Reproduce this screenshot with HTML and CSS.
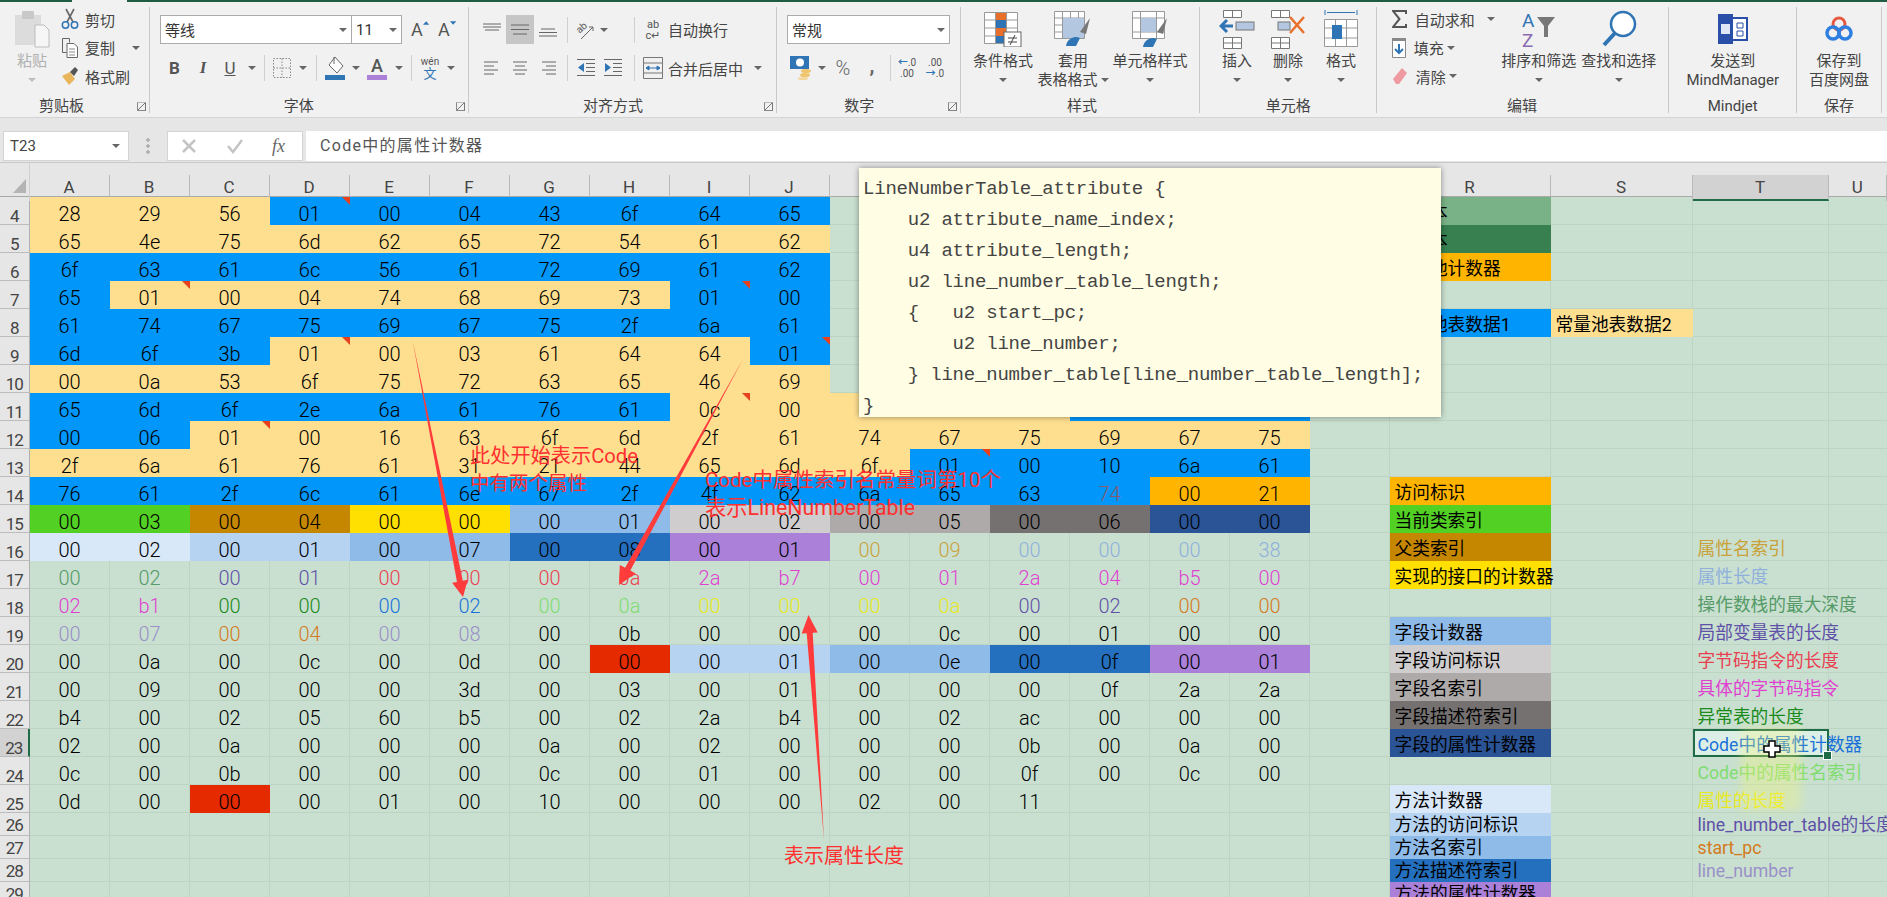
FILE: index.html
```html
<!DOCTYPE html>
<html lang="zh-CN">
<head>
  <meta charset="UTF-8">
  <title>Excel - Code属性</title>
  <link rel="stylesheet" href="styles.css">
</head>
<body>
<div class="page">

  <!-- title bar edge -->
  <div class="topbar"><div class="w72"></div><div class="tabmark"></div></div>

  <!-- ribbon -->
  <div class="ribbon">

    <div class="group g-clip">
      <div class="gbody">
        <div class="big paste">
          <div class="big-ico">
            <svg width="36" height="38" viewBox="0 0 36 38"><rect x="1" y="5" width="26" height="30" fill="#dcdcdc"/><rect x="8" y="1" width="12" height="8" rx="1" fill="#c8c8c8"/><path d="M21 15h9l5 5v17H21z" fill="#f6f6f6" stroke="#bdbdbd"/></svg>
          </div>
          <div class="line muted">粘贴</div>
          <div class="line"><i class="caret light"></i></div>
        </div>
        <div class="stack clip-stack">
          <div class="sitem">
            <svg class="s-ico" width="18" height="22" viewBox="0 0 18 22"><path d="M5 1l7 13M13 1L6 14" stroke="#666" stroke-width="1.6" fill="none"/><circle cx="4.5" cy="17" r="3.2" fill="none" stroke="#2f75b5" stroke-width="1.5"/><circle cx="13.5" cy="17" r="3.2" fill="none" stroke="#2f75b5" stroke-width="1.5"/></svg>
            <span>剪切</span>
          </div>
          <div class="sitem">
            <svg class="s-ico" width="18" height="22" viewBox="0 0 18 22"><path d="M1.500 1.500h7v4M1.500 1.500v14h4" fill="none" stroke="#666"/><path d="M6 6.500h7l3.500 3.500v10.500H6z" fill="#fff" stroke="#666"/><path d="M8 12h6M8 15h6M8 18h6" stroke="#888"/></svg>
            <span>复制</span><i class="caret cm"></i>
          </div>
          <div class="sitem">
            <svg class="s-ico" width="18" height="20" viewBox="0 0 18 20"><path d="M1 10l8-4 5 7-6 6z" fill="#e9b65c"/><path d="M9 6l5-5 3 3-4 6z" fill="#555"/></svg>
            <span>格式刷</span>
          </div>
        </div>
      </div>
      <div class="glabel">剪贴板</div>
      <i class="launcher"></i>
    </div>

    <div class="group g-font">
      <div class="gbody col">
        <div class="r1">
          <div class="sel-box w192"><span>等线</span><i class="caret"></i></div>
          <div class="sel-box w50 nol"><span>11</span><i class="caret"></i></div>
          <div class="grow-a">A<svg width="7" height="4" viewBox="0 0 7 4"><path d="M0 4l3.500-4 3.500 4z" fill="#2f75b5"/></svg></div>
          <div class="grow-a">A<svg width="7" height="4" viewBox="0 0 7 4"><path d="M0 0l3.500 4 3.500-4z" fill="#2f75b5"/></svg></div>
        </div>
        <div class="r2">
          <b class="bx w29 fmt">B</b>
          <i class="bx w28 fmt serif-i">I</i>
          <u class="bx w26 fmt">U</u>
          <div class="bx w18"><i class="caret"></i></div>
          <div class="bx w6"><i class="vsep"></i></div>
          <div class="bx w30"><svg width="18" height="20" viewBox="0 0 18 20"><path d="M.5.500h17v19H.500zM9 .500v19M.5 10h17" fill="none" stroke="#888" stroke-dasharray="1.500 1.500"/></svg></div>
          <div class="bx w12"><i class="caret"></i></div>
          <div class="bx w14"><i class="vsep"></i></div>
          <div class="bx w24"><svg width="20" height="24" viewBox="0 0 20 24"><path d="M10 1l8 9-6 7-8-8z" fill="#fff" stroke="#666"/><path d="M9 1v7" stroke="#666"/><rect y="19" width="20" height="5" fill="#2f75b5"/></svg></div>
          <div class="bx w18"><i class="caret"></i></div>
          <div class="bx w24 colora"><span>A</span><i></i></div>
          <div class="bx w20"><i class="caret"></i></div>
          <div class="bx w5"><i class="vsep"></i></div>
          <div class="bx w32 wen"><span>wén</span><span>文</span></div>
          <div class="bx w10"><i class="caret"></i></div>
        </div>
      </div>
      <div class="glabel">字体</div>
      <i class="launcher"></i>
    </div>

    <div class="group g-align">
      <div class="gbody col">
        <div class="r1">
          <div class="bx h29 w28"><svg width="18" height="14" viewBox="0 0 18 14"><path d="M0 1h18M0 4h18M2 7h14" stroke="#666"/></svg></div>
          <div class="bx h29 w28 on"><svg width="18" height="14" viewBox="0 0 18 14"><path d="M0 2h18M0 6.500h18M2 11h14" stroke="#666"/></svg></div>
          <div class="bx h29 w28"><svg width="18" height="14" viewBox="0 0 18 14"><path d="M2 6h14M0 9.500h18M0 13h18" stroke="#666"/></svg></div>
          <div class="bx h29 w10"><i class="vsep"></i></div>
          <div class="bx h29 w28"><svg width="20" height="22" viewBox="0 0 20 22"><text x="1" y="12" class="svgt" transform="rotate(-40 6 10)">ab</text><path d="M5 20L17 8M13 8h4v4" fill="none" stroke="#666"/></svg></div>
          <div class="bx h29 w8"><i class="caret"></i></div>
          <div class="bx h29 w22"></div>
          <div class="bx h29 w8"><i class="vsep"></i></div>
          <div class="bx h29 w30 wrapi"><span>ab</span><span>c↵</span></div>
          <span class="rlabel">自动换行</span>
        </div>
        <div class="r2">
          <div class="bx w28"><svg width="16" height="14" viewBox="0 0 16 14"><path d="M0 1h14M0 5h10M0 9h14M0 13h10" stroke="#666"/></svg></div>
          <div class="bx w28"><svg width="16" height="14" viewBox="0 0 16 14"><path d="M1 1h14M3 5h10M1 9h14M3 13h10" stroke="#666"/></svg></div>
          <div class="bx w28"><svg width="16" height="14" viewBox="0 0 16 14"><path d="M2 1h14M6 5h10M2 9h14M6 13h10" stroke="#666"/></svg></div>
          <div class="bx w10"><i class="vsep"></i></div>
          <div class="bx w27"><svg width="18" height="18" viewBox="0 0 18 18"><path d="M0 .500h18M9 4.500h9M9 8.500h9M9 12.500h9M0 16.500h18" stroke="#666"/><path d="M7 4v9L1 8.500z" fill="#2f75b5"/></svg></div>
          <div class="bx w27"><svg width="18" height="18" viewBox="0 0 18 18"><path d="M0 .500h18M9 4.500h9M9 8.500h9M9 12.500h9M0 16.500h18" stroke="#666"/><path d="M1 4v9l6-4.500z" fill="#2f75b5"/></svg></div>
          <div class="bx w4"></div>
          <div class="bx w8"><i class="vsep"></i></div>
          <div class="bx w30"><svg width="20" height="22" viewBox="0 0 20 22"><path d="M.5.500h19v21H.500zM.5 6h19M.5 16h19" fill="none" stroke="#777"/><path d="M3 11h14M3 11l3-2v4zM17 11l-3-2v4z" fill="#2f75b5" stroke="#2f75b5"/></svg></div>
          <span class="rlabel w75">合并后居中</span>
          <div class="bx w30"><i class="caret"></i></div>
        </div>
      </div>
      <div class="glabel">对齐方式</div>
      <i class="launcher"></i>
    </div>

    <div class="group g-num">
      <div class="gbody col">
        <div class="r1">
          <div class="sel-box w163"><span>常规</span><i class="caret"></i></div>
        </div>
        <div class="r2">
          <div class="bx w28"><svg width="23" height="24" viewBox="0 0 23 24"><rect width="19" height="13" fill="#2f75b5"/><circle cx="10" cy="6.500" r="4" fill="#fff"/><ellipse cx="16" cy="15" rx="5" ry="2" fill="#f0c36d"/><ellipse cx="15" cy="19" rx="5" ry="2" fill="#f0c36d"/><ellipse cx="13" cy="22.500" rx="5" ry="1.500" fill="#f3d69a"/></svg></div>
          <div class="bx w14"><i class="caret"></i></div>
          <div class="bx w28 pct">%</div>
          <div class="bx w30 comma">,</div>
          <div class="bx w6"><i class="vsep"></i></div>
          <div class="bx w28 dec"><span><em>←</em>.0</span><span>.00</span></div>
          <div class="bx w28 dec"><span>.00</span><span><em>→</em>.0</span></div>
        </div>
      </div>
      <div class="glabel">数字</div>
      <i class="launcher"></i>
    </div>

    <div class="group g-style">
      <div class="gbody">
        <div class="big w76">
          <div class="big-ico">
            <svg width="38" height="36" viewBox="0 0 38 36"><path d="M.5 1.500h33v31H.500zM11.500 1.500v31M22.500 1.500v31M.5 9h33M.5 17h33M.5 25h33" fill="#fff" stroke="#999"/><rect x="12" y="2" width="10" height="7" fill="#e8702a"/><rect x="12" y="9" width="10" height="8" fill="#2f75b5"/><rect x="12" y="17" width="10" height="8" fill="#e8702a"/><rect x="12" y="25" width="10" height="7" fill="#2f75b5"/><rect x="20" y="21" width="17" height="15" fill="#fff" stroke="#666"/><path d="M24 27h9M24 31h9M31 24l-5 10" stroke="#444" fill="none"/></svg>
          </div>
          <div class="line">条件格式</div>
          <div class="line"><i class="caret"></i></div>
        </div>
        <div class="big w64">
          <div class="big-ico">
            <svg width="38" height="38" viewBox="0 0 38 38"><path d="M.5 1.500h30v27H.500zM8.500 1.500v27M16.500 1.500v27M24.500 1.500v27M.5 8h30M.5 15h30M.5 22h30" fill="#fff" stroke="#999"/><rect x="9" y="8" width="21" height="20" fill="#b4c7e0"/><path d="M26 22l10-14-4 16z" fill="#777"/><path d="M12 36c1-7 8-11 14-8l-4 8z" fill="#2f75b5"/></svg>
          </div>
          <div class="line">套用</div>
          <div class="line">表格格式<i class="caret cn"></i></div>
        </div>
        <div class="big w90">
          <div class="big-ico">
            <svg width="38" height="38" viewBox="0 0 38 38"><path d="M1.500 1.500h32v27h-32zM9.500 1.500v27M25.500 1.500v27M1.500 8h32M1.500 22h32" fill="#fff" stroke="#999"/><rect x="10" y="8" width="15" height="14" fill="#b4c7e0"/><path d="M26 22l10-14-4 16z" fill="#777"/><path d="M12 37c1-7 8-11 14-8l-4 8z" fill="#2f75b5"/></svg>
          </div>
          <div class="line">单元格样式</div>
          <div class="line"><i class="caret"></i></div>
        </div>
      </div>
      <div class="glabel">样式</div>
    </div>

    <div class="group g-cells">
      <div class="gbody">
        <div class="big w52">
          <div class="big-ico">
            <svg width="36" height="40" viewBox="0 0 36 40"><path d="M4.500 1.500h18v7h-18zM13.500 1.500v7M4.500 28.500h18v11h-18zM13.500 28.500v11M4.500 34h18" fill="#fff" stroke="#777"/><rect x="17" y="13" width="18" height="8" fill="#b4c7e0" stroke="#777"/><path d="M14 17H3M8 11l-6 6 6 6" fill="none" stroke="#2f75b5" stroke-width="3"/></svg>
          </div>
          <div class="line">插入</div>
          <div class="line"><i class="caret"></i></div>
        </div>
        <div class="big w50">
          <div class="big-ico">
            <svg width="36" height="40" viewBox="0 0 36 40"><path d="M1.500 1.500h18v7h-18zM10.500 1.500v7M1.500 28.500h18v11h-18zM10.500 28.500v11M1.500 34h18" fill="#fff" stroke="#777"/><rect x="8" y="13" width="12" height="8" fill="#b4c7e0" stroke="#777"/><path d="M20 8l14 16M34 8L20 24" stroke="#e8702a" stroke-width="2.500"/></svg>
          </div>
          <div class="line">删除</div>
          <div class="line"><i class="caret"></i></div>
        </div>
        <div class="big w56">
          <div class="big-ico">
            <svg width="36" height="40" viewBox="0 0 36 40"><path d="M2 1v5M34 1v5M4 3.500h28" stroke="#2f75b5" fill="none"/><path d="M1.500 10.500h33v27h-33zM12.500 10.500v27M23.500 10.500v27M1.500 19h33M1.500 29h33" fill="#fff" stroke="#999"/><rect x="9" y="16" width="10" height="14" fill="#2f75b5"/></svg>
          </div>
          <div class="line">格式</div>
          <div class="line"><i class="caret"></i></div>
        </div>
      </div>
      <div class="glabel">单元格</div>
    </div>

    <div class="group g-edit">
      <div class="gbody">
        <div class="stack edit-stack">
          <div class="sitem">
            <svg class="e-ico" width="15" height="18" viewBox="0 0 15 18"><path d="M14 4V1H1l6.500 8L1 17h13v-3" fill="none" stroke="#555" stroke-width="2"/></svg>
            <span>自动求和</span><i class="caret ce"></i>
          </div>
          <div class="sitem">
            <svg class="e-ico" width="14" height="20" viewBox="0 0 14 20"><path d="M.5.500h13v19H.500z" fill="#fff" stroke="#888"/><rect width="14" height="3" fill="#888"/><path d="M7 6v9M3 11l4 4 4-4" fill="none" stroke="#2f75b5" stroke-width="2"/></svg>
            <span>填充</span><i class="caret cs"></i>
          </div>
          <div class="sitem">
            <svg class="e-ico" width="16" height="18" viewBox="0 0 16 18"><path d="M1 12L10 1l5 5-8 11H4z" fill="#ef9aa0"/></svg>
            <span>清除</span><i class="caret cs"></i>
          </div>
        </div>
        <div class="big w80">
          <div class="big-ico">
            <svg width="36" height="40" viewBox="0 0 36 40"><text x="1" y="18" class="svgaz az-a">A</text><text x="1" y="38" class="svgaz az-z">Z</text><path d="M16 8h18l-7 9v11h-4V17z" fill="#777"/></svg>
          </div>
          <div class="line">排序和筛选</div>
          <div class="line"><i class="caret"></i></div>
        </div>
        <div class="big w80">
          <div class="big-ico">
            <svg width="36" height="40" viewBox="0 0 36 40"><circle cx="22" cy="15" r="12" fill="#fff" stroke="#2f75b5" stroke-width="2.500"/><path d="M14 24L3 36" stroke="#2f75b5" stroke-width="4"/></svg>
          </div>
          <div class="line">查找和选择</div>
          <div class="line"><i class="caret"></i></div>
        </div>
      </div>
      <div class="glabel">编辑</div>
    </div>

    <div class="group g-mind">
      <div class="gbody">
        <div class="big wfull">
          <div class="big-ico">
            <svg width="30" height="30" viewBox="0 0 30 30"><rect x="8" y="4" width="21" height="22" fill="#fff" stroke="#2a4fa8" stroke-width="2"/><rect width="15" height="30" fill="#2a4fa8"/><rect x="3" y="10" width="9" height="10" fill="#dfe6f5"/><path d="M19 9h6v5h-6zM19 17h6v5h-6z" fill="none" stroke="#2a4fa8"/></svg>
          </div>
          <div class="line">发送到</div>
          <div class="line">MindManager</div>
        </div>
      </div>
      <div class="glabel">Mindjet</div>
    </div>

    <div class="group g-save">
      <div class="gbody">
        <div class="big wfull">
          <div class="big-ico">
            <svg width="28" height="26" viewBox="0 0 28 26"><circle cx="14" cy="8" r="6" fill="none" stroke="#e8573f" stroke-width="3"/><circle cx="8" cy="17" r="6" fill="none" stroke="#2f7fe0" stroke-width="3.500"/><circle cx="20" cy="17" r="6" fill="none" stroke="#2f7fe0" stroke-width="3.500"/></svg>
          </div>
          <div class="line">保存到</div>
          <div class="line">百度网盘</div>
        </div>
      </div>
      <div class="glabel">保存</div>
    </div>
  </div>

  <!-- name box and formula bar -->
  <div class="formula">
    <div class="namebox"><span>T23</span><i class="caret"></i></div>
    <div class="dots"></div>
    <div class="fx-btns">
      <svg width="16" height="16" viewBox="0 0 16 16"><path d="M2 2l12 12M14 2L2 14" stroke="#c4c4c4" stroke-width="2.500"/></svg>
      <svg width="18" height="16" viewBox="0 0 18 16"><path d="M2 8l5 6L16 2" fill="none" stroke="#c4c4c4" stroke-width="2.500"/></svg>
      <span class="fx">fx</span>
    </div>
    <div class="fbar">Code中的属性计数器</div>
  </div>

  <!-- sheet -->
  <div class="colhead">
    <div class="corner"></div>
    <div class="ch">A</div><div class="ch">B</div><div class="ch">C</div><div class="ch">D</div><div class="ch">E</div><div class="ch">F</div><div class="ch">G</div><div class="ch">H</div><div class="ch">I</div><div class="ch">J</div><div class="ch">K</div><div class="ch">L</div><div class="ch">M</div><div class="ch">N</div><div class="ch">O</div><div class="ch">P</div><div class="ch">Q</div><div class="ch">R</div><div class="ch">S</div><div class="ch act">T</div><div class="ch">U</div>
  </div>

  <div class="rows">
    <div class="row"><div class="rh">4</div><span class="c y">28</span><span class="c y">29</span><span class="c y">56</span><span class="c b mark">01</span><span class="c b">00</span><span class="c b">04</span><span class="c b">43</span><span class="c b">6f</span><span class="c b">64</span><span class="c b">65</span><span class="c lbl col-r f-g1">次版本</span></div>
    <div class="row"><div class="rh">5</div><span class="c y">65</span><span class="c y">4e</span><span class="c y">75</span><span class="c y">6d</span><span class="c y">62</span><span class="c y">65</span><span class="c y">72</span><span class="c y">54</span><span class="c y">61</span><span class="c y">62</span><span class="c lbl col-r f-g2">主版本</span></div>
    <div class="row"><div class="rh">6</div><span class="c b">6f</span><span class="c b">63</span><span class="c b">61</span><span class="c b">6c</span><span class="c b">56</span><span class="c b">61</span><span class="c b">72</span><span class="c b">69</span><span class="c b">61</span><span class="c b">62</span><span class="c lbl col-r o">常量池计数器</span></div>
    <div class="row"><div class="rh">7</div><span class="c b">65</span><span class="c y mark">01</span><span class="c y">00</span><span class="c y">04</span><span class="c y">74</span><span class="c y">68</span><span class="c y">69</span><span class="c y">73</span><span class="c b mark">01</span><span class="c b">00</span></div>
    <div class="row"><div class="rh">8</div><span class="c b">61</span><span class="c b">74</span><span class="c b">67</span><span class="c b">75</span><span class="c b">69</span><span class="c b">67</span><span class="c b">75</span><span class="c b">2f</span><span class="c b">6a</span><span class="c b">61</span><span class="c lbl col-r b">常量池表数据1</span><span class="c lbl col-s y">常量池表数据2</span></div>
    <div class="row"><div class="rh">9</div><span class="c b">6d</span><span class="c b">6f</span><span class="c b">3b</span><span class="c y mark">01</span><span class="c y">00</span><span class="c y">03</span><span class="c y">61</span><span class="c y">64</span><span class="c y">64</span><span class="c b mark">01</span></div>
    <div class="row"><div class="rh">10</div><span class="c y">00</span><span class="c y">0a</span><span class="c y">53</span><span class="c y">6f</span><span class="c y">75</span><span class="c y">72</span><span class="c y">63</span><span class="c y">65</span><span class="c y">46</span><span class="c y">69</span></div>
    <div class="row"><div class="rh">11</div><span class="c b">65</span><span class="c b">6d</span><span class="c b">6f</span><span class="c b">2e</span><span class="c b">6a</span><span class="c b">61</span><span class="c b">76</span><span class="c b">61</span><span class="c y mark">0c</span><span class="c y">00</span><span class="c y"></span><span class="c y"></span><span class="c y"></span><span class="c b"></span><span class="c b"></span><span class="c b"></span></div>
    <div class="row"><div class="rh">12</div><span class="c b">00</span><span class="c b">06</span><span class="c y mark">01</span><span class="c y">00</span><span class="c y">16</span><span class="c y">63</span><span class="c y">6f</span><span class="c y">6d</span><span class="c y">2f</span><span class="c y">61</span><span class="c y">74</span><span class="c y">67</span><span class="c y">75</span><span class="c y">69</span><span class="c y">67</span><span class="c y">75</span></div>
    <div class="row"><div class="rh">13</div><span class="c y">2f</span><span class="c y">6a</span><span class="c y">61</span><span class="c y">76</span><span class="c y">61</span><span class="c y">31</span><span class="c y">21</span><span class="c y">44</span><span class="c y">65</span><span class="c y">6d</span><span class="c y">6f</span><span class="c b mark">01</span><span class="c b">00</span><span class="c b">10</span><span class="c b">6a</span><span class="c b">61</span></div>
    <div class="row"><div class="rh">14</div><span class="c b">76</span><span class="c b">61</span><span class="c b">2f</span><span class="c b">6c</span><span class="c b">61</span><span class="c b">6e</span><span class="c b">67</span><span class="c b">2f</span><span class="c b">4f</span><span class="c b">62</span><span class="c b">6a</span><span class="c b">65</span><span class="c b">63</span><span class="c b t-rust">74</span><span class="c o">00</span><span class="c o">21</span><span class="c lbl col-r o">访问标识</span></div>
    <div class="row"><div class="rh">15</div><span class="c g">00</span><span class="c g">03</span><span class="c br">00</span><span class="c br">04</span><span class="c ye">00</span><span class="c ye">00</span><span class="c lb">00</span><span class="c lb">01</span><span class="c lg">00</span><span class="c lg">02</span><span class="c mg">00</span><span class="c mg">05</span><span class="c dg">00</span><span class="c dg">06</span><span class="c nv">00</span><span class="c nv">00</span><span class="c lbl col-r g">当前类索引</span></div>
    <div class="row"><div class="rh">16</div><span class="c pl">00</span><span class="c pl">02</span><span class="c l2">00</span><span class="c l2">01</span><span class="c lb">00</span><span class="c lb">07</span><span class="c db">00</span><span class="c db">08</span><span class="c pu">00</span><span class="c pu">01</span><span class="c t-gold">00</span><span class="c t-gold">09</span><span class="c t-sky">00</span><span class="c t-sky">00</span><span class="c t-sky">00</span><span class="c t-sky">38</span><span class="c lbl col-r br">父类索引</span><span class="c lbl col-t t-gold">属性名索引</span></div>
    <div class="row"><div class="rh">17</div><span class="c t-moss">00</span><span class="c t-moss">02</span><span class="c t-pur">00</span><span class="c t-pur">01</span><span class="c t-red">00</span><span class="c t-red">00</span><span class="c t-red">00</span><span class="c t-red">0a</span><span class="c t-pink">2a</span><span class="c t-pink">b7</span><span class="c t-pink">00</span><span class="c t-pink">01</span><span class="c t-pink">2a</span><span class="c t-pink">04</span><span class="c t-pink">b5</span><span class="c t-pink">00</span><span class="c lbl col-r ye">实现的接口的计数器</span><span class="c lbl col-t t-sky">属性长度</span></div>
    <div class="row"><div class="rh">18</div><span class="c t-pink">02</span><span class="c t-pink">b1</span><span class="c t-grn">00</span><span class="c t-grn">00</span><span class="c t-blu">00</span><span class="c t-blu">02</span><span class="c t-lime">00</span><span class="c t-lime">0a</span><span class="c t-yel">00</span><span class="c t-yel">00</span><span class="c t-yel">00</span><span class="c t-yel">0a</span><span class="c t-pur">00</span><span class="c t-pur">02</span><span class="c t-org">00</span><span class="c t-org">00</span><span class="c lbl col-t t-moss">操作数栈的最大深度</span></div>
    <div class="row"><div class="rh">19</div><span class="c t-lav">00</span><span class="c t-lav">07</span><span class="c t-org">00</span><span class="c t-org">04</span><span class="c t-lav">00</span><span class="c t-lav">08</span><span class="c">00</span><span class="c">0b</span><span class="c">00</span><span class="c">00</span><span class="c">00</span><span class="c">0c</span><span class="c">00</span><span class="c">01</span><span class="c">00</span><span class="c">00</span><span class="c lbl col-r lb">字段计数器</span><span class="c lbl col-t t-pur">局部变量表的长度</span></div>
    <div class="row"><div class="rh">20</div><span class="c">00</span><span class="c">0a</span><span class="c">00</span><span class="c">0c</span><span class="c">00</span><span class="c">0d</span><span class="c">00</span><span class="c re">00</span><span class="c l2">00</span><span class="c l2">01</span><span class="c lb">00</span><span class="c lb">0e</span><span class="c db">00</span><span class="c db">0f</span><span class="c pu">00</span><span class="c pu">01</span><span class="c lbl col-r lg">字段访问标识</span><span class="c lbl col-t t-red">字节码指令的长度</span></div>
    <div class="row"><div class="rh">21</div><span class="c">00</span><span class="c">09</span><span class="c">00</span><span class="c">00</span><span class="c">00</span><span class="c">3d</span><span class="c">00</span><span class="c">03</span><span class="c">00</span><span class="c">01</span><span class="c">00</span><span class="c">00</span><span class="c">00</span><span class="c">0f</span><span class="c">2a</span><span class="c">2a</span><span class="c lbl col-r mg">字段名索引</span><span class="c lbl col-t t-pink">具体的字节码指令</span></div>
    <div class="row"><div class="rh">22</div><span class="c">b4</span><span class="c">00</span><span class="c">02</span><span class="c">05</span><span class="c">60</span><span class="c">b5</span><span class="c">00</span><span class="c">02</span><span class="c">2a</span><span class="c">b4</span><span class="c">00</span><span class="c">02</span><span class="c">ac</span><span class="c">00</span><span class="c">00</span><span class="c">00</span><span class="c lbl col-r dg">字段描述符索引</span><span class="c lbl col-t t-grn">异常表的长度</span></div>
    <div class="row"><div class="rh act">23</div><span class="c">02</span><span class="c">00</span><span class="c">0a</span><span class="c">00</span><span class="c">00</span><span class="c">00</span><span class="c">0a</span><span class="c">00</span><span class="c">02</span><span class="c">00</span><span class="c">00</span><span class="c">00</span><span class="c">0b</span><span class="c">00</span><span class="c">0a</span><span class="c">00</span><span class="c lbl col-r nv">字段的属性计数器</span><span class="c lbl col-t t-blu sel">Code中的属性计数器</span></div>
    <div class="row"><div class="rh">24</div><span class="c">0c</span><span class="c">00</span><span class="c">0b</span><span class="c">00</span><span class="c">00</span><span class="c">00</span><span class="c">0c</span><span class="c">00</span><span class="c">01</span><span class="c">00</span><span class="c">00</span><span class="c">00</span><span class="c">0f</span><span class="c">00</span><span class="c">0c</span><span class="c">00</span><span class="c lbl col-t t-lime">Code中的属性名索引</span></div>
    <div class="row"><div class="rh">25</div><span class="c">0d</span><span class="c">00</span><span class="c re">00</span><span class="c">00</span><span class="c">01</span><span class="c">00</span><span class="c">10</span><span class="c">00</span><span class="c">00</span><span class="c">00</span><span class="c">02</span><span class="c">00</span><span class="c">11</span><span class="c lbl col-r pl">方法计数器</span><span class="c lbl col-t t-yel">属性的长度</span></div>
    <div class="row low"><div class="rh">26</div><span class="c lbl col-r l2">方法的访问标识</span><span class="c lbl col-t t-pur">line_number_table的长度</span></div>
    <div class="row low"><div class="rh">27</div><span class="c lbl col-r lb">方法名索引</span><span class="c lbl col-t t-org">start_pc</span></div>
    <div class="row low"><div class="rh">28</div><span class="c lbl col-r db">方法描述符索引</span><span class="c lbl col-t t-lav">line_number</span></div>
    <div class="row low"><div class="rh">29</div><span class="c lbl col-r pu">方法的属性计数器</span></div>
  </div>

  <!-- comment popup and the red notes drawn over the sheet -->
  <pre class="popup">LineNumberTable_attribute {
    u2 attribute_name_index;
    u4 attribute_length;
    u2 line_number_table_length;
    {   u2 start_pc;
        u2 line_number;
    } line_number_table[line_number_table_length];
}</pre>

  <div class="glow"></div>

  <svg class="arrows" width="1887" height="897" viewBox="0 0 1887 897">
    <polygon points="412.500,340 462.800,580.700 467.700,579.800 463,597 452.100,582.800 457,581.900"/>
    <polygon points="743.600,358 630.300,570.600 635.600,573.500 619,585 619.800,564.900 625.100,567.800"/>
    <polygon points="824,840 812.700,632.800 817.700,632.400 808.500,615 801.700,633.600 806.700,633.200"/>
  </svg>

  <div class="note n1">此处开始表示Code</div>
  <div class="note n2">中有两个属性</div>
  <div class="note n3">Code中属性索引名常量词第10个</div>
  <div class="note n4">表示LineNumberTable</div>
  <div class="note n5">表示属性长度</div>

  <svg class="cursor" width="18" height="18" viewBox="0 0 18 18"><path d="M6 1h6v5h5v6h-5v5H6v-5H1V6h5z" fill="#fff" stroke="#000" stroke-width="1.500"/></svg>
</div>
</body>
</html>
```
FILE: styles.css
```css
* {
  box-sizing: border-box;
}

html, body {
  margin: 0;
  padding: 0;
}

body {
  background: #c9e0d0;
  color: #444;
  font-family: Roboto, "Noto Sans CJK SC", sans-serif;
  font-size: 15px;
  overflow: hidden;
}

.page {
  position: relative;
  width: 1887px;
  height: 897px;
  overflow: hidden;
}

/* top edge */
.topbar {
  display: flex;
  height: 2px;
  background: #1f5c44;
}

.w72 {
  width: 72px;
}

.tabmark {
  width: 55px;
  background: #f1f1f1;
}

/* ribbon */
.ribbon {
  display: flex;
  height: 116px;
  padding-top: 5px;
  background: #f1f1f1;
  border-bottom: 1px solid #d4d4d4;
}

.group {
  position: relative;
  display: flex;
  flex-direction: column;
  height: 106px;
  border-right: 1px solid #c9c9c9;
}

.g-clip { width: 150px; }
.g-font { width: 318.5px; padding-left: 10px; }
.g-align { width: 308.5px; padding-left: 9.5px; }
.g-num { width: 183.500px; padding-left: 10px; }
.g-style { width: 239.500px; padding-left: 4.5px; }
.g-cells { width: 176.700px; padding-left: 11px; }
.g-edit { width: 292.800px; padding-left: 15px; }
.g-mind { width: 127.500px; }
.g-save { width: 85px; }

.gbody {
  display: flex;
  flex: none;
  height: 88px;
}

.gbody.col {
  flex-direction: column;
}

.glabel {
  height: 18px;
  line-height: 22px;
  text-align: center;
  font-size: 15px;
  color: #444;
}

.g-clip .glabel { padding-right: 26px; }
.g-font .glabel { padding-right: 30px; }
.g-align .glabel { padding-right: 28px; }
.g-num .glabel { padding-right: 28px; }
.g-cells .glabel { padding-right: 10px; }
.g-edit .glabel { padding-right: 16px; }

.launcher {
  position: absolute;
  right: 3px;
  bottom: 2px;
  width: 9px;
  height: 9px;
  border: 1px solid #888;
  border-top-color: #bbb;
  border-right-color: #777;
  background: linear-gradient(135deg, transparent 45%, #777 45% 55%, transparent 55%);
}

/* big buttons with two label lines */
.big {
  display: flex;
  flex-direction: column;
  align-items: center;
  flex: none;
}

.big-ico {
  display: flex;
  align-items: center;
  justify-content: center;
  height: 44.500px;
  width: 100%;
}

.line {
  display: flex;
  align-items: center;
  justify-content: center;
  height: 19px;
  line-height: 19px;
  white-space: nowrap;
}

.wfull { width: 100%; }
.w50 { width: 50px; }
.w52 { width: 52px; }
.w56 { width: 56px; }
.w64 { width: 64px; }
.w76 { width: 76px; }
.w80 { width: 80px; }
.w90 { width: 90px; }

.paste {
  width: 40px;
  margin-left: 12px;
}

.muted {
  color: #b0b0b0;
}

/* dropdown arrow */
.caret {
  display: inline-block;
  flex: none;
  width: 0;
  height: 0;
  border-left: 4px solid transparent;
  border-right: 4px solid transparent;
  border-top: 4px solid #666;
}

.caret.light { border-top-color: #bdbdbd; }
.caret.cm { margin-left: 17px; }
.caret.cn { margin-left: 3px; }
.caret.ce { margin-left: 12px; }
.caret.cs { margin-left: 3px; }

/* stacked small commands */
.stack {
  display: flex;
  flex-direction: column;
  margin-top: -2px;
  flex: none;
}

.clip-stack {
  width: 90px;
  margin-left: 9px;
}

.edit-stack {
  width: 107px;
}

.sitem {
  display: flex;
  align-items: center;
  height: 28.500px;
  white-space: nowrap;
}

.s-ico {
  flex: none;
  margin-right: 6px;
}

.e-ico {
  flex: none;
  margin-right: 8px;
}

.r1 {
  display: flex;
  align-items: center;
  height: 29px;
  margin-top: 8px;
}

.r2 {
  display: flex;
  align-items: center;
  height: 24px;
  margin-top: 12px;
}

.sel-box {
  display: flex;
  align-items: center;
  justify-content: space-between;
  height: 29px;
  padding: 0 4px;
  background: #fff;
  border: 1px solid #ababab;
  color: #333;
}

.w192 { width: 192px; }
.w163 { width: 163px; }
.sel-box.w50 { width: 50px; }
.nol { border-left: 0; }

.grow-a {
  display: flex;
  align-items: flex-start;
  width: 27px;
  margin-left: 0;
  padding-left: 9px;
  font-size: 18px;
  line-height: 24px;
  color: #555;
}

.grow-a svg {
  margin-top: 3px;
}

.bx {
  display: flex;
  align-items: center;
  justify-content: center;
  flex: none;
  height: 24px;
}

.h29 { height: 29px; }
.w4 { width: 4px; }
.w5 { width: 5px; }
.w6 { width: 6px; }
.w8 { width: 8px; }
.w10 { width: 10px; }
.w12 { width: 12px; }
.w14 { width: 14px; }
.w18 { width: 18px; }
.w20 { width: 20px; }
.w22 { width: 22px; }
.w24 { width: 24px; }
.w26 { width: 26px; }
.w27 { width: 27px; }
.w28 { width: 28px; }
.w29 { width: 29px; }
.w30 { width: 30px; }
.w32 { width: 32px; }
.w75 { width: 75px; }

.fmt {
  font-size: 17px;
  color: #555;
}

.serif-i {
  font-family: "Liberation Serif", serif;
  font-weight: bold;
}

.on {
  background: #c6c6c6;
}

.vsep {
  display: block;
  width: 1px;
  height: 26px;
  background: #d0d0d0;
}

.colora {
  position: relative;
  flex-direction: column;
  font-size: 18px;
  line-height: 18px;
  font-weight: 500;
  color: #555;
}

.colora i {
  display: block;
  width: 20px;
  height: 5px;
  background: #aa80d8;
}

.wen {
  flex-direction: column;
  font-size: 10px;
  line-height: 12px;
  color: #555;
}

.wen span + span {
  color: #2f75b5;
  font-size: 13px;
}

.wrapi {
  flex-direction: column;
  font-size: 11px;
  line-height: 11px;
  color: #555;
}

.rlabel {
  flex: none;
  white-space: nowrap;
}

.pct {
  font-size: 20px;
  font-weight: 300;
  color: #666;
}

.comma {
  font-size: 20px;
  font-weight: 700;
  color: #666;
  padding-bottom: 6px;
}

.dec {
  flex-direction: column;
  font-size: 10px;
  line-height: 11px;
  color: #555;
}

.dec em {
  font-style: normal;
  color: #2f75b5;
  font-weight: 700;
}

.svgt {
  font-size: 10px;
  fill: #555;
}

.svgaz {
  font-size: 19px;
}

.az-a { fill: #2f75b5; }
.az-z { fill: #8a6ab0; }

/* formula row */
.formula {
  display: flex;
  height: 45px;
  padding: 13px 0 1px 3px;
  background: #e6e6e6;
  border-bottom: 1px solid #c8c8c8;
}

.namebox {
  display: flex;
  align-items: center;
  justify-content: space-between;
  width: 126px;
  padding: 0 8px 0 6px;
  background: #fff;
  border: 1px solid #d4d4d4;
  color: #444;
}

.dots {
  width: 38px;
  background: radial-gradient(circle, #b0b0b0 1.500px, transparent 2px) center / 3px 6px no-repeat;
  background-size: 4px 6px;
  background-repeat: repeat-y;
  background-clip: content-box;
  padding: 5px 0;
}

.fx-btns {
  display: flex;
  align-items: center;
  justify-content: space-between;
  width: 136px;
  padding: 0 17px 0 13px;
  background: #fff;
  border: 1px solid #d4d4d4;
}

.fx {
  font-family: "Liberation Serif", serif;
  font-style: italic;
  font-size: 18px;
  color: #666;
}

.fbar {
  flex: 1;
  margin-left: 3px;
  padding-left: 14px;
  line-height: 30px;
  font-size: 16px;
  letter-spacing: 1.300px;
  color: #555;
  background: #fff;
}

/* sheet */
.colhead,
.row {
  display: grid;
  grid-template-columns: 29.500px repeat(17, 80px) 161px 142px 136px 1fr;
}

.colhead {
  height: 34px;
  background: #e6e6e6;
  border-bottom: 1px solid #a8a8a8;
}

.corner {
  position: relative;
  border-right: 1px solid #d0d0d0;
}

.corner::after {
  content: "";
  position: absolute;
  left: 13px;
  top: 16px;
  border-left: 13px solid transparent;
  border-bottom: 14px solid #b4b4b4;
}

.ch {
  margin-top: 12px;
  border-right: 1px solid #b9b9b9;
  line-height: 24px;
  text-align: center;
  font-size: 17px;
  color: #444;
}

.ch.act {
  background: #d2d2d2;
  border-bottom: 2px solid #1f6b45;
}

.rows {
  background-image:
    repeating-linear-gradient(to right, transparent 0 79px, #bdd4c3 79px 80px),
    linear-gradient(#bdd4c3, #bdd4c3),
    linear-gradient(#bdd4c3, #bdd4c3),
    linear-gradient(#bdd4c3, #bdd4c3);
  background-size: 1360px 100%, 1px 100%, 1px 100%, 1px 100%;
  background-position: 29.500px 0, 1550px 0, 1692px 0, 1828px 0;
  background-repeat: no-repeat;
}

.row {
  height: 28px;
  background: linear-gradient(#bdd4c3, #bdd4c3) bottom / 100% 1px no-repeat;
}

.rh {
  padding-top: 5px;
  line-height: 28px;
  height: 28px;
  text-align: center;
  font-size: 17px;
  letter-spacing: -1px;
  color: #444;
  background: #e6e6e6;
  border-right: 1px solid #b0b0b0;
  border-bottom: 1px solid #bcbcbc;
}

.rh.act {
  background: #d2d2d2;
  border-right: 2px solid #1f6b45;
}

.row.low {
  height: 23px;
}

.row.low .rh {
  height: 23px;
  padding-top: 1px;
  line-height: 23px;
}

.row.low .c {
  height: 23px;
  padding-top: 0;
  line-height: 24px;
}

.c {
  position: relative;
  display: block;
  height: 28px;
  padding-top: 3px;
  line-height: 28px;
  text-align: center;
  font-size: 20px;
  font-weight: 300;
  color: #000;
  white-space: nowrap;
}

.lbl {
  padding-left: 5px;
  text-align: left;
  font-size: 17.700px;
  font-weight: 400;
  line-height: 26px;
}

.col-r { grid-column: 19; }
.col-s { grid-column: 20; }
.col-t { grid-column: 21; }

/* cell fills */
.y { background: #fedf90; }
.b { background: #0096fa; }
.o { background: #ffb400; }
.g { background: #52d024; }
.br { background: #c68700; }
.ye { background: #ffe000; }
.lb { background: #8fbbe9; }
.lg { background: #cfcdcd; }
.mg { background: #aeaaaa; }
.dg { background: #757171; }
.nv { background: #2a5496; }
.pl { background: #d9e8f8; }
.l2 { background: #b7d3f2; }
.db { background: #246fbe; }
.pu { background: #aa80d8; }
.re { background: #e62a00; }
.f-g1 { background: #7ab287; }
.f-g2 { background: #38804f; }

/* cell text colours */
.t-gold { color: #c9a23a; }
.t-sky { color: #8fb0dc; }
.t-moss { color: #559a68; }
.t-pur { color: #5f50a8; }
.t-red { color: #e84050; }
.t-pink { color: #e040d0; }
.t-grn { color: #1a8a1a; }
.t-blu { color: #1a72d8; }
.t-lime { color: #80dc70; }
.t-yel { color: #e8e820; }
.t-org { color: #d47a20; }
.t-lav { color: #9a90c8; }
.t-rust { color: #8a5a6a; }

/* red triangle in the corner of a commented cell */
.mark::after {
  content: "";
  position: absolute;
  top: 0;
  right: 0;
  border-top: 8px solid #e8401c;
  border-left: 8px solid transparent;
}

.sel {
  z-index: 2;
  background: #dcefe7;
  box-shadow: inset 0 0 0 2px #1f6b45;
  overflow: visible;
}

.sel::after {
  content: "";
  position: absolute;
  right: -3px;
  bottom: -3px;
  width: 7px;
  height: 7px;
  background: #1f6b45;
  border: 1px solid #fff;
}

/* overlays */
.popup {
  position: absolute;
  left: 859px;
  top: 168px;
  width: 582px;
  height: 249px;
  margin: 0;
  padding: 5.500px 0 0 4px;
  background: #fffde3;
  box-shadow: 0 0 6px rgba(0, 0, 0, .4);
  font-family: "Liberation Mono", monospace;
  font-size: 19px;
  letter-spacing: -.2px;
  line-height: 31px;
  color: #444;
  z-index: 3;
}

.glow {
  position: absolute;
  left: 1741px;
  top: 728px;
  width: 60px;
  height: 82px;
  background: rgba(250, 250, 110, .3);
  filter: blur(5px);
  z-index: 3;
}

.arrows {
  position: absolute;
  left: 0;
  top: 0;
  z-index: 4;
}

.arrows polygon {
  fill: #ff3b3b;
}

.note {
  position: absolute;
  z-index: 5;
  font-size: 19.500px;
  line-height: 24px;
  white-space: nowrap;
  color: #ff3030;
}

.n1 { left: 470px; top: 444px; font-size: 20.200px; }
.n2 { left: 470px; top: 472px; }
.n3 { left: 705px; top: 468px; font-size: 20.500px; }
.n4 { left: 705px; top: 496px; font-size: 21.300px; }
.n5 { left: 784px; top: 844px; font-size: 20px; }

.cursor {
  position: absolute;
  left: 1763px;
  top: 740px;
  z-index: 6;
}
```
